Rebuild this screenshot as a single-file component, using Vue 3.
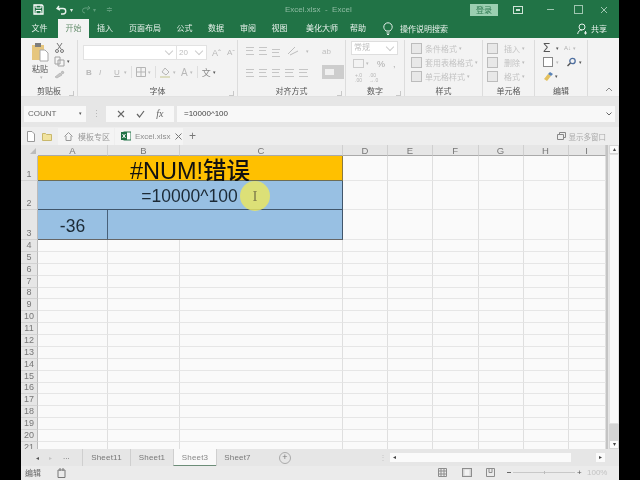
<script setup>
const tabs = [
  ['文件', 37], ['开始', 31], ['插入', 32], ['页面布局', 48], ['公式', 31], ['数据', 32],
  ['审阅', 32], ['视图', 31], ['美化大师', 54], ['帮助', 18],
]
const columns = ['A', 'B', 'C', 'D', 'E', 'F', 'G', 'H', 'I']
const topRows = [1, 2, 3]
const lowerRows = Array.from({ length: 18 }, (_, i) => i + 4)
const rightCols = ['D', 'E', 'F', 'G', 'H', 'I']
const sheets = [['Sheet11', 48], ['Sheet1', 43], ['Sheet3', 43], ['Sheet7', 42]]
const styleRows = [['条件格式', '▾'], ['套用表格格式', '▾'], ['单元格样式', '▾']]
const cellRows = ['插入', '删除', '格式']
</script>

<template>
  <div class="frame">
    <main class="window">
      <header class="titlebar">
        <svg class="tb-ic save" width="11" height="11" viewBox="0 0 11 11"><path d="M1 1h8l1 1v8H1z" fill="none" stroke="#fff" stroke-width="1.3"/><path d="M3 1v3h5V1M3 10V6.500h5V10" fill="none" stroke="#fff"/></svg>
        <svg class="tb-ic undo" width="12" height="10" viewBox="0 0 12 10"><path d="M3 1 1 3.500 4 5M1.500 3.500H7a2.700 2.700 0 0 1 0 5.500H5" fill="none" stroke="#e8f2ec" stroke-width="1.400"/></svg>
        <span class="tiny-arrow">▾</span>
        <svg class="tb-ic redo" width="10" height="9" viewBox="0 0 10 9"><path d="M7 1l2 2-3 2M9 3H4a2.500 2.500 0 0 0 0 5" fill="none" stroke="#5c9c79"/></svg>
        <span class="tiny-arrow dim">▾</span>
        <span class="tiny-arrow custom dim">≑</span>
        <span class="doc-title">Excel.xlsx&nbsp;&nbsp;-&nbsp;&nbsp;Excel</span>
        <button class="login">登录</button>
        <svg class="win restore" width="10" height="8" viewBox="0 0 10 8"><rect x=".5" y=".5" width="9" height="7" fill="none" stroke="#cfe3d7"/><path d="M3 3h4v2H3z" fill="#cfe3d7"/></svg>
        <span class="win minimize"></span>
        <span class="win maximize"></span>
        <svg class="win close" width="8" height="8" viewBox="0 0 8 8"><path d="M1 1l6 6M7 1 1 7" stroke="#9fc6b0"/></svg>
      </header>

      <nav class="tabbar">
        <span v-for="(t, i) in tabs" :key="t[0]" class="tab" :class="{ active: i === 1 }" :style="{ width: t[1] + 'px' }">{{ t[0] }}</span>
        <svg class="bulb" width="10" height="13" viewBox="0 0 10 13"><path d="M3 9C1 7 .8 5.800.8 5a4.200 4.200 0 0 1 8.400 0c0 .8-.2 2-2.200 4zM3.500 11h3M4 12.500h2" fill="none" stroke="#e6f1eb"/></svg>
        <span class="search">操作说明搜索</span>
        <svg class="user" width="11" height="12" viewBox="0 0 11 12"><circle cx="5" cy="4" r="3" fill="none" stroke="#e6f1eb"/><path d="M.7 11c.4-3 2-4 4.300-4M8.500 8v3.500M7 10h3" fill="none" stroke="#e6f1eb"/></svg>
        <span class="share">共享</span>
      </nav>

      <section class="ribbon">
        <div class="group g-clip">
          <div class="clip-body">
            <div class="paste">
              <svg width="18" height="20" viewBox="0 0 18 20"><rect x="1" y="3" width="12" height="15" fill="#e6c67e"/><rect x="4" y="1" width="6" height="4" fill="#7d7d7d"/><path d="M9 8h5l3 3v8H9z" fill="#fff" stroke="#a8a8a8"/></svg>
              <span>粘贴</span>
              <i class="mini">▾</i>
            </div>
            <div class="clip-tools">
              <svg width="11" height="11" viewBox="0 0 11 11"><path d="M3 1l4 6M8 1 4 7" stroke="#777" fill="none"/><circle cx="3" cy="9" r="1.500" fill="none" stroke="#777"/><circle cx="8" cy="9" r="1.500" fill="none" stroke="#777"/></svg>
              <span class="copy-row"><svg width="11" height="11" viewBox="0 0 11 11"><path d="M1 1h5v7H1zM4 4h6v6H4z" fill="#f5f5f5" stroke="#a2a2a2"/></svg><i class="mini dark">▾</i></span>
              <svg width="11" height="9" viewBox="0 0 11 9"><path d="M1 7l5-4 2 2-5 3zM7 2l2-1 1 2-2 1z" fill="#c6c6c6" stroke="#aaa" stroke-width=".6"/></svg>
            </div>
          </div>
          <div class="glabel">剪贴板<i class="launch"></i></div>
        </div>

        <div class="group g-font">
          <div class="font-top">
            <span class="select fname"><b class="chev"></b></span>
            <span class="select fsize">20<b class="chev"></b></span>
            <span class="grow">Aˆ</span>
            <span class="shrink">Aˇ</span>
          </div>
          <div class="font-row">
            <b>B</b><em>I</em><u>U</u><i class="mini">▾</i><s class="sep"></s>
            <svg width="10" height="10" viewBox="0 0 10 10"><path d="M.5.500h9v9h-9zM5 .5v9M.5 5h9" fill="none" stroke="#b5b5b5"/></svg><i class="mini">▾</i><s class="sep"></s>
            <svg width="11" height="11" viewBox="0 0 11 11"><path d="M5 1l4 4-3 3-4-3z" fill="none" stroke="#b5b5b5"/><rect y="9" width="10" height="2" fill="#dcdcc0"/></svg><i class="mini">▾</i>
            <span class="fcolor">A</span><i class="mini">▾</i><s class="sep"></s>
            <span class="wen">文</span><i class="mini dark">▾</i>
          </div>
          <div class="glabel">字体<i class="launch"></i></div>
        </div>

        <div class="group g-align">
          <div class="align-grid">
            <div class="align-rows">
              <div class="align-row">
                <i class="lines"></i><i class="lines"></i><i class="lines low"></i>
                <svg class="orient" width="12" height="10" viewBox="0 0 12 10"><path d="M1 8l7-7M3 9l8-4" stroke="#bdbdbd" fill="none"/></svg><i class="mini">▾</i>
              </div>
              <div class="align-row second">
                <i class="lines"></i><i class="lines"></i><i class="lines"></i><i class="lines ind"></i><i class="lines ind"></i>
              </div>
            </div>
            <div class="wrap-col">
              <span class="wrap-ic">ab</span>
              <span class="merge"><i></i></span>
            </div>
          </div>
          <div class="glabel">对齐方式<i class="launch"></i></div>
        </div>

        <div class="group g-num">
          <span class="numsel">常规<b class="chev"></b></span>
          <div class="num-row"><i class="money"></i><i class="mini">▾</i><span class="pct">%</span><span class="comma">,</span></div>
          <div class="num-row third"><span class="dec">+.0<br>.00</span><span class="dec">.00<br>→.0</span></div>
          <div class="glabel">数字<i class="launch"></i></div>
        </div>

        <div class="group g-style">
          <div v-for="r in styleRows" :key="r[0]" class="list-row"><i class="cmd-ic"></i><span>{{ r[0] }}</span><i class="mini">{{ r[1] }}</i></div>
          <div class="glabel">样式</div>
        </div>

        <div class="group g-cell">
          <div v-for="r in cellRows" :key="r" class="list-row"><i class="cmd-ic small"></i><span>{{ r }}</span><i class="mini">▾</i></div>
          <div class="glabel">单元格</div>
        </div>

        <div class="group g-edit">
          <div class="edit-row"><span class="sigma">Σ</span><i class="mini dark">▾</i><span class="sort">A↓</span><i class="mini">▾</i></div>
          <div class="edit-row"><i class="fill"></i><i class="mini">▾</i><svg class="find" width="11" height="10" viewBox="0 0 11 10"><circle cx="6.500" cy="4" r="2.700" fill="none" stroke="#4e6fa0" stroke-width="1.300"/><path d="M4.500 6 1.500 9" stroke="#555" stroke-width="1.500"/></svg><i class="mini dark">▾</i></div>
          <div class="edit-row"><svg width="10" height="9" viewBox="0 0 10 9"><path d="M1 7l4-5 3 2-4 5z" fill="#e4c15f"/><path d="M5 2l2-2 3 2-2 2z" fill="#5b83b5"/></svg><i class="mini dark">▾</i></div>
          <div class="glabel">编辑</div>
        </div>

        <div class="collapse"><svg width="8" height="5" viewBox="0 0 8 5"><path d="M1 4l3-3 3 3" fill="none" stroke="#888"/></svg></div>
      </section>

      <section class="formula">
        <div class="namebox">COUNT<i class="mini dark">▾</i></div>
        <span class="grip">⋮</span>
        <div class="fx-buttons">
          <svg width="8" height="8" viewBox="0 0 8 8"><path d="M1 1l6 6M7 1 1 7" stroke="#666" stroke-width="1.100"/></svg>
          <svg width="9" height="8" viewBox="0 0 9 8"><path d="M1 4l2.500 3L8 1" fill="none" stroke="#666" stroke-width="1.200"/></svg>
          <span class="fx">fx</span>
        </div>
        <div class="formula-input"><span>=10000^100</span><svg width="6" height="4" viewBox="0 0 6 4"><path d="M.5.500 3 3 5.500.500" fill="none" stroke="#666"/></svg></div>
      </section>

      <section class="filebar">
        <svg width="8" height="11" viewBox="0 0 8 11"><path d="M.5.500h4.500l2.500 2.500v7.500h-7z" fill="#fff" stroke="#999"/></svg>
        <svg class="folder" width="10" height="9" viewBox="0 0 10 9"><path d="M.5 1.500h3l1 1h5v6h-9z" fill="#f1e39f" stroke="#c9b86c"/></svg>
        <div class="ftab home">
          <svg width="9" height="9" viewBox="0 0 9 9"><path d="M.5 4.500 4.500.5l4 4M2 4v4.500h5V4" fill="none" stroke="#999"/></svg>
          <span>模板专区</span>
        </div>
        <div class="ftab book">
          <svg width="10" height="10" viewBox="0 0 10 10"><rect x="3" y="1" width="7" height="8" fill="#fff" stroke="#217346"/><rect y="1" width="6" height="8" fill="#217346"/><path d="M1.500 3l3 4M4.500 3l-3 4" stroke="#fff"/></svg>
          <span>Excel.xlsx</span>
          <svg width="7" height="7" viewBox="0 0 7 7"><path d="M.5.500l6 6M6.500.500l-6 6" stroke="#777"/></svg>
        </div>
        <span class="plus">+</span>
        <div class="multi">
          <svg width="9" height="8" viewBox="0 0 9 8"><path d="M2.500 2V.5h6v5H6.500M.5 2.500h6v5h-6z" fill="none" stroke="#888"/></svg>
          <span>显示多窗口</span>
        </div>
      </section>

      <section class="sheet-area">
        <div class="grid">
          <div class="corner"><i></i></div>
          <div v-for="c in columns" :key="c" class="colhead">{{ c }}</div>

          <div class="rowhead">1</div>
          <div class="merged title">#NUM!错误</div>
          <div v-for="c in rightCols" :key="'r1' + c" class="cell"></div>

          <div class="rowhead">2</div>
          <div class="merged fill-blue expr">=10000^100</div>
          <div v-for="c in rightCols" :key="'r2' + c" class="cell"></div>

          <div class="rowhead">3</div>
          <div class="blue-a">-36</div>
          <div class="blue-bc"></div>
          <div v-for="c in rightCols" :key="'r3' + c" class="cell"></div>

          <template v-for="r in lowerRows" :key="r">
            <div class="rowhead">{{ r }}</div>
            <div v-for="c in columns" :key="r + c" class="cell"></div>
          </template>
        </div>
        <div class="vscroll">
          <span class="sbtn">▴</span>
          <span class="vtrack"></span>
          <span class="vgap"></span>
          <span class="sbtn">▾</span>
        </div>
        <div class="highlight"><span>I</span></div>
      </section>

      <section class="sheetbar">
        <div class="nav"><span>◂</span><span class="off">▸</span><span class="more">...</span></div>
        <span v-for="s in sheets" :key="s[0]" class="stab" :class="{ on: s[0] === 'Sheet3' }" :style="{ width: s[1] + 'px' }">{{ s[0] }}</span>
        <span class="addsheet">+</span>
        <span class="sdots">⋮</span>
        <div class="hscroll"><span class="hbtn">◂</span><span class="htrack"></span><span class="hgap"></span><span class="hbtn">▸</span></div>
      </section>

      <footer class="status">
        <span class="edit-label">编辑</span>
        <svg class="macro" width="9" height="10" viewBox="0 0 9 10"><path d="M1 2h7v7.500H1zM3 0v3M6 0v3" fill="none" stroke="#777"/></svg>
        <div class="views">
          <svg width="9" height="9" viewBox="0 0 9 9"><path d="M.5.500h8v8h-8zM3 .5v8M6 .5v8M.5 3h8M.5 6h8" fill="none" stroke="#8d8d8d"/></svg>
          <svg width="10" height="9" viewBox="0 0 10 9"><rect x=".5" y=".5" width="9" height="8" fill="#d5d5d5" stroke="#8d8d8d"/><rect x="2.500" y="1.500" width="5" height="6" fill="#f2f2f2"/></svg>
          <svg width="9" height="9" viewBox="0 0 9 9"><path d="M.5.500h8v8h-8zM3 .5v4h3v-4" fill="none" stroke="#8d8d8d"/></svg>
        </div>
        <div class="zoom"><i class="zm"></i><i class="zline"><b></b></i><i class="zp">+</i><span>100%</span></div>
      </footer>
    </main>
  </div>
</template>

<style scoped>
.frame { width: 640px; height: 480px; background: #000; padding-left: 21px; box-sizing: border-box; overflow: hidden; filter: blur(.6px); font-family: "Liberation Sans", "Noto Sans CJK SC", sans-serif; }
.window { width: 598px; height: 480px; background: #ececec; display: flex; flex-direction: column; position: relative; overflow: hidden; }
i { font-style: normal; display: inline-block; }

.titlebar { height: 19px; flex: none; background: #217346; display: flex; align-items: center; color: #fff; }
.save { margin-left: 12px; }
.undo { margin-left: 12px; }
.tiny-arrow { font-size: 6px; margin-left: 2px; color: #dcebe2; }
.tiny-arrow.dim { color: #5c9c79; }
.redo { margin-left: 8px; }
.custom { margin-left: 10px; font-size: 8px; }
.doc-title { margin-left: 172px; font-size: 8px; color: #8fbca3; width: 90px; white-space: nowrap; flex: none; }
.login { margin-left: 95px; width: 28px; height: 12px; padding: 0; border: 0; background: #9bcfb1; color: #2f7a52; font: 8px "Noto Sans CJK SC", sans-serif; flex: none; }
.win { flex: none; }
.restore { margin-left: 15px; }
.minimize { margin-left: 24px; width: 7px; border-top: 1px solid #9fc6b0; }
.maximize { margin-left: 20px; width: 7px; height: 7px; border: 1px solid #9fc6b0; }
.close { margin-left: 17px; }

.tabbar { height: 19px; flex: none; background: #217346; display: flex; align-items: center; color: #e7f1eb; font-size: 8px; }
.tab { height: 19px; line-height: 19px; text-align: center; flex: none; white-space: nowrap; }
.tab.active { background: #f3f3f3; color: #68906f; }
.bulb { margin-left: 16px; flex: none; }
.search { margin-left: 7px; width: 177px; flex: none; }
.user { flex: none; }
.share { margin-left: 3px; }

.ribbon { height: 59px; flex: none; background: #f3f3f3; display: flex; border-bottom: 1px solid #e2e2e2; box-sizing: border-box; color: #b8b8b8; }
.group { position: relative; border-right: 1px solid #dcdcdc; box-sizing: border-box; flex: none; height: 56px; margin-top: 2px; }
.glabel { position: absolute; left: 0; right: 0; bottom: -1px; text-align: center; font-size: 8px; line-height: 11px; color: #555; }
.launch { position: absolute; right: 3px; bottom: 1px; width: 4px; height: 4px; border: 1px solid #c8c8c8; border-width: 0 1px 1px 0; }
.mini { font-size: 5px; color: #bbb; margin-left: 2px; line-height: 1; }
.mini.dark { color: #555; }
.sep { display: inline-block; width: 1px; height: 12px; background: #dedede; margin: 0 4px; }

.g-clip { width: 57px; }
.clip-body { display: flex; padding: 2px 0 0 8px; }
.paste { width: 22px; display: flex; flex-direction: column; align-items: center; font-size: 8px; color: #555; line-height: 10px; }
.paste span { margin-top: 3px; }
.clip-tools { margin-left: 3px; display: flex; flex-direction: column; gap: 3px; height: 40px; }
.copy-row { display: flex; align-items: center; }

.g-font { width: 160px; }
.font-top { display: flex; align-items: center; padding: 5px 0 0 5px; }
.select { height: 13px; background: #fff; border: 1px solid #e2e2e2; box-sizing: content-box; display: block; position: relative; font-size: 8px; line-height: 13px; padding-left: 2px; color: #c0c0c0; }
.fname { width: 90px; }
.fsize { width: 27px; margin-left: -1px; }
.chev { position: absolute; right: 4px; top: 2px; width: 5px; height: 5px; border: solid #ccc; border-width: 0 1px 1px 0; transform: rotate(45deg); }
.grow { margin-left: 5px; font-size: 9px; width: 15px; }
.shrink { font-size: 8px; }
.font-row { display: flex; align-items: center; padding: 6px 0 0 8px; font-size: 8px; height: 12px; }
.font-row b { width: 13px; }
.font-row em { width: 15px; }
.font-row u { width: 8px; }
.fcolor { margin-left: 5px; font-size: 10px; }
.wen { font-size: 9px; color: #888; }

.g-align { width: 108px; }
.align-grid { display: flex; padding: 3px 0 0 8px; }
.align-rows { width: 76px; }
.align-row { display: flex; align-items: center; gap: 5px; height: 14px; margin-top: 1px; }
.align-row.second { margin-top: 8px; }
.lines { width: 8px; height: 6px; border-top: 1px solid #c6c6c6; border-bottom: 1px solid #c6c6c6; position: relative; }
.lines::after { content: ""; position: absolute; left: 0; right: 1px; top: 2px; height: 1px; background: #c6c6c6; }
.lines.low { margin-top: 3px; }
.lines.ind { width: 9px; }
.orient { margin-left: 2px; }
.wrap-col { display: flex; flex-direction: column; }
.wrap-ic { font-size: 8px; color: #c0c0c0; margin-left: 0; height: 22px; line-height: 18px; }
.merge { width: 22px; height: 14px; background: #cdcdcd; display: flex; align-items: center; padding-left: 3px; box-sizing: border-box; }
.merge i { width: 9px; height: 6px; background: #f0f0f0; }

.g-num { width: 59px; }
.numsel { display: block; position: relative; margin: 1px 0 0 5px; width: 47px; height: 14px; box-sizing: border-box; background: #fff; border: 1px solid #dedede; font-size: 8px; line-height: 12px; padding-left: 2px; color: #bdbdbd; }
.num-row { display: flex; align-items: center; padding-left: 7px; height: 13px; margin-top: 2px; font-size: 9px; color: #aaa; }
.money { width: 9px; height: 7px; border: 1px solid #ccc; }
.pct { margin-left: 8px; }
.comma { margin-left: 8px; }
.num-row.third { margin-top: 1px; gap: 4px; padding-left: 9px; }
.dec { font-size: 5px; line-height: 5px; color: #b5b5b5; width: 10px; }

.g-style { width: 78px; padding: 1px 0 0 6px; }
.g-cell { width: 52px; padding: 1px 0 0 4px; }
.list-row { display: flex; align-items: center; height: 14px; font-size: 8px; color: #c3c3c3; white-space: nowrap; }
.cmd-ic { width: 9px; height: 9px; border: 1px solid #bcbcbc; background: #e8e8e8; margin-right: 3px; flex: none; }
.cmd-ic.small { margin-right: 6px; }

.g-edit { width: 53px; padding: 1px 0 0 8px; }
.edit-row { display: flex; align-items: center; height: 14px; color: #555; }
.sigma { font-size: 12px; width: 11px; line-height: 14px; }
.sort { font-size: 6px; color: #b0b0b0; margin-left: 5px; }
.fill { width: 8px; height: 8px; border: 1px solid #888; background: #fff; margin-right: 1px; }
.find { margin-left: 7px; }
.collapse { flex: 1; display: flex; align-items: flex-end; justify-content: flex-end; padding: 0 6px 4px 0; }

.formula { height: 30px; flex: none; background: #e6e6e6; display: flex; align-items: center; box-sizing: border-box; padding: 3px 4px 0 3px; }
.namebox { width: 62px; height: 16px; line-height: 16px; background: #f8f8f8; font-size: 8px; padding-left: 4px; box-sizing: border-box; color: #666; display: flex; justify-content: space-between; align-items: center; padding-right: 4px; }
.grip { width: 20px; text-align: center; color: #b5b5b5; font-size: 9px; }
.fx-buttons { width: 68px; height: 16px; background: #f8f8f8; display: flex; align-items: center; justify-content: space-around; padding: 0 5px; box-sizing: border-box; }
.fx { font: italic 10px "Liberation Serif", serif; color: #666; }
.formula-input { margin-left: 3px; flex: 1; height: 16px; background: #f8f8f8; display: flex; align-items: center; justify-content: space-between; padding: 0 3px 0 7px; font-size: 8px; color: #444; }

.filebar { height: 18px; flex: none; background: #eeeeee; display: flex; align-items: center; padding-left: 6px; }
.folder { margin-left: 7px; }
.ftab { height: 17px; display: flex; align-items: center; background: #f4f4f4; font-size: 8px; color: #999; box-sizing: border-box; }
.home { margin-left: 6px; width: 56px; padding-left: 6px; gap: 5px; }
.book { margin-left: 1px; width: 68px; padding-left: 6px; gap: 4px; color: #8d8d8d; }
.plus { margin-left: 6px; font-size: 12px; color: #777; width: 12px; }
.multi { margin-left: auto; margin-right: 13px; display: flex; align-items: center; gap: 3px; font-size: 7.500px; color: #aaa; }

.sheet-area { height: 304px; flex: none; position: relative; display: flex; background: #e5e5e5; }
.grid { display: grid; width: 585px; height: 304px; overflow: hidden; grid-template-columns: 17px 70px 72px 163px 45px 45px 45.500px 45px 45px 37px; grid-template-rows: 11px 25px 29px 30px repeat(18, 11.880px); background: #fafafa; border-right: 2px solid #c4c4c4; box-sizing: content-box; }
.corner { background: #e6e6e6; position: relative; }
.corner i { position: absolute; right: 2px; bottom: 2px; border: 3px solid transparent; border-right-color: #bcbcbc; border-bottom-color: #bcbcbc; }
.colhead { background: #e6e6e6; text-align: center; font-size: 9.500px; line-height: 11px; color: #777; border-right: 1px solid #cfcfcf; border-bottom: 1px solid #aaa; box-sizing: border-box; }
.rowhead { background: #e6e6e6; border-bottom: 1px solid #d2d2d2; box-sizing: border-box; border-right: 1px solid #bbb; display: flex; align-items: flex-end; justify-content: center; font-size: 9px; line-height: 11px; color: #777; }
.cell { border-right: 1px solid #dfdfdf; border-bottom: 1px solid #e6e6e6; box-sizing: border-box; }
.merged { grid-column: span 3; display: flex; align-items: center; justify-content: center; box-sizing: border-box; color: #111; }
.title { background: #ffc000; font-size: 23.500px; padding-top: 2px; font-family: "Liberation Sans", "Noto Sans CJK SC", sans-serif; font-weight: 500; border-bottom: 1px solid #6d6d55; border-right: 1px solid #8a7a40; }
.fill-blue { background: #98c0e3; border-bottom: 1px solid #41566b; border-right: 1px solid #41566b; }
.expr { font-size: 17.500px; padding: 3px 1px 0 0; color: #1c2a36; }
.blue-a { background: #98c0e3; border-right: 1px solid #48617a; border-bottom: 1px solid #666; box-sizing: border-box; display: flex; align-items: center; justify-content: center; padding-top: 3px; font-size: 17.500px; color: #1c2a36; }
.blue-bc { grid-column: span 2; background: #98c0e3; border-right: 1px solid #41566b; border-bottom: 1px solid #666; box-sizing: border-box; }

.vscroll { width: 10px; margin-left: 1px; display: flex; flex-direction: column; height: 304px; }
.sbtn { height: 9px; background: #fbfbfb; border: 1px solid #d6d6d6; box-sizing: border-box; font-size: 6px; line-height: 7px; text-align: center; color: #444; flex: none; }
.vtrack { height: 270px; background: #fafafa; border: 1px solid #e2e2e2; box-sizing: border-box; }
.vgap { flex: 1; background: #d4d4d4; }
.highlight { position: absolute; left: 219px; top: 36px; width: 30px; height: 30px; border-radius: 50%; background: rgba(235, 230, 95, .82); display: flex; align-items: center; justify-content: center; color: #807c4c; font: 15px "Liberation Serif", serif; }

.sheetbar { height: 17px; flex: none; background: #e6e6e6; display: flex; align-items: center; font-size: 8px; color: #777; }
.nav { width: 61px; display: flex; padding-left: 15px; gap: 10px; box-sizing: border-box; font-size: 6px; color: #555; }
.nav .off { color: #c4c4c4; }
.nav .more { font-size: 8px; line-height: 6px; color: #666; margin-left: 1px; }
.stab { height: 17px; line-height: 17px; text-align: center; box-sizing: border-box; border-left: 1px solid #cfcfcf; flex: none; letter-spacing: .2px; }
.stab.on { background: #f9f9f9; color: #888; border-bottom: 1.500px solid #6c8d78; }
.addsheet { margin-left: 21px; width: 10px; height: 10px; line-height: 9px; text-align: center; border: 1px solid #aaa; border-radius: 50%; font-size: 9px; flex: none; }
.sdots { margin-left: 88px; width: 6px; color: #c5c5c5; }
.hscroll { margin-left: 5px; display: flex; align-items: center; width: 215px; height: 9px; }
.hbtn { width: 9px; height: 9px; background: #fafafa; font-size: 6px; line-height: 9px; text-align: center; flex: none; color: #444; }
.htrack { width: 172px; height: 9px; background: #fafafa; }
.hgap { width: 25px; }

.status { height: 14px; flex: none; background: #ebebeb; display: flex; align-items: center; font-size: 8px; color: #666; padding-bottom: 1px; box-sizing: border-box; }
.edit-label { margin-left: 4px; }
.macro { margin-left: 16px; }
.views { margin-left: 372px; width: 57px; display: flex; justify-content: space-between; }
.zoom { margin-left: 12px; display: flex; align-items: center; color: #c3c3c3; }
.zm { width: 4px; border-top: 1px solid #666; }
.zline { width: 62px; margin: 0 2px; border-top: 1px solid #c8c8c8; position: relative; }
.zline b { position: absolute; left: 31px; top: -2px; height: 3px; border-left: 1px solid #bbb; }
.zp { color: #555; font-size: 8px; width: 9px; line-height: 8px; }
.zoom span { margin-left: 1px; font-size: 8px; }
</style>
